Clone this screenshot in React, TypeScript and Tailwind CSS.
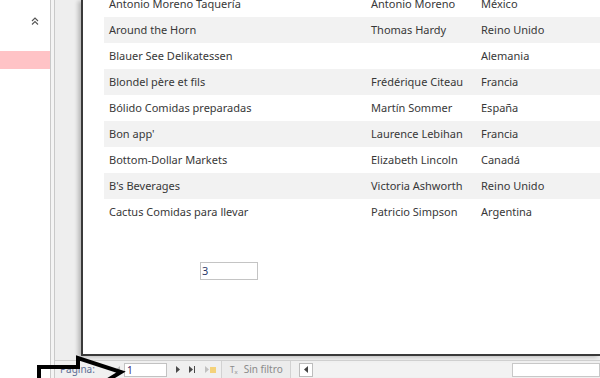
import React from 'react'

// Datos de clientes (vista de informe)
const clientes = [
  ['Antonio Moreno Taquería', 'Antonio Moreno', 'México'],
  ['Around the Horn', 'Thomas Hardy', 'Reino Unido'],
  ['Blauer See Delikatessen', '', 'Alemania'],
  ['Blondel père et fils', 'Frédérique Citeau', 'Francia'],
  ['Bólido Comidas preparadas', 'Martín Sommer', 'España'],
  ["Bon app'", 'Laurence Lebihan', 'Francia'],
  ['Bottom-Dollar Markets', 'Elizabeth Lincoln', 'Canadá'],
  ["B's Beverages", 'Victoria Ashworth', 'Reino Unido'],
  ['Cactus Comidas para llevar', 'Patricio Simpson', 'Argentina'],
]

function Tri({ dir = 'right', color = '#4a4a4a' }: { dir?: 'left' | 'right'; color?: string }) {
  return (
    <svg width="4" height="7" viewBox="0 0 4 7">
      {dir === 'right' ? <path d="M0 0 L4 3.5 L0 7 Z" fill={color} /> : <path d="M4 0 L0 3.5 L4 7 Z" fill={color} />}
    </svg>
  )
}

export default function App() {
  return (
    <div className="relative w-[600px] h-[378px] overflow-hidden flex bg-white font-['Noto_Sans',sans-serif]">
      {/* panel de navegación */}
      <div className="w-[50px] h-full bg-white flex flex-col shrink-0">
        <div className="h-[51px] flex justify-end items-start pt-[17px] pr-[11px]">
          <svg width="8" height="8" viewBox="0 0 8 8" fill="none" stroke="#555" strokeWidth="1.1">
            <path d="M1 4 L4 1 L7 4" />
            <path d="M1 7.5 L4 4.5 L7 7.5" />
          </svg>
        </div>
        <div className="h-[18px] bg-[#ffc3c6]" />
      </div>
      <div className="w-[5px] h-full shrink-0 border-l border-r border-[#c9c9c9] bg-[#f4f4f4]" />

      <div className="flex-1 flex flex-col min-w-0">
        <div className="h-[360px] bg-[#eeeeee] pl-[26px] pb-[4px] flex">
          <div className="flex-1 bg-white border-l-2 border-b-2 border-[#3a3a3a] shadow-[-3px_1px_4px_rgba(0,0,0,0.22)] overflow-hidden">
            <div className="-mt-[9px] pl-[21px] text-[11px] text-[#383838]">
              {clientes.map(([empresa, contacto, pais], i) => (
                <div key={empresa} className={`h-[26px] flex items-center ${i % 2 === 1 ? 'bg-[#f2f2f2]' : 'bg-white'}`}>
                  <span className="w-[267px] pl-[5px] whitespace-nowrap">{empresa}</span>
                  <span className="w-[110px] whitespace-nowrap">{contacto}</span>
                  <span className="whitespace-nowrap">{pais}</span>
                </div>
              ))}
            </div>
            <div className="ml-[117px] mt-[37px] w-[58px] h-[18px] border border-[#c4c4c4] text-[11px] text-[#2d3a6a] leading-[16px] pl-[1px]">
              3
            </div>
          </div>
        </div>

        {/* barra de navegación de registros */}
        <div className="h-[18px] border-t border-[#cfcfcf] bg-[#f0f0f0] flex items-center text-[10px]">
          <span className="pl-[5px] w-[61px] text-[#5f6f96]">Página:</span>
          <Tri dir="left" color="#b8b8b8" />
          <div className="ml-[4px] w-[43px] h-[14px] bg-white border border-[#c2c2c2] leading-[12px] pl-[2px] text-[#3a1f6e]">1</div>
          <div className="ml-[9px] flex items-center">
            <Tri />
          </div>
          <div className="ml-[9px] flex items-center gap-[1px]">
            <Tri />
            <div className="w-[1px] h-[7px] bg-[#4a4a4a]" />
          </div>
          <div className="ml-[10px] flex items-center gap-[1px]">
            <Tri color="#c0c0c0" />
            <svg width="6" height="6" viewBox="0 0 6 6">
              <rect x="0" y="0" width="6" height="6" fill="#f4d27a" />
            </svg>
          </div>
          <div className="ml-[5px] h-[18px] w-[70px] border-l border-r border-[#d2d2d2] bg-[#ececec] flex items-center gap-[6px] pl-[8px] text-[#8a8a8a]">
            <span className="text-[8px] leading-none">T<sub className="text-[6px]">x</sub></span>
            <span>Sin filtro</span>
          </div>
          <div className="ml-[8px] w-[14px] h-[14px] bg-white border border-[#bdbdbd] flex items-center justify-center">
            <Tri dir="left" color="#444" />
          </div>
          <div className="w-[199px] h-[14px] bg-[#f2f2f2]" />
          <div className="flex-1 h-[14px] bg-white border border-[#c8c8c8]" />
        </div>
      </div>

      {/* flecha de anotación */}
      <svg className="absolute left-0 top-0 pointer-events-none" width="600" height="378" viewBox="0 0 600 378">
        <path d="M39 384 V367 H78 V358 L121 372 L98 386" fill="none" stroke="#000" strokeWidth="4" strokeLinejoin="miter" />
      </svg>
    </div>
  )
}
